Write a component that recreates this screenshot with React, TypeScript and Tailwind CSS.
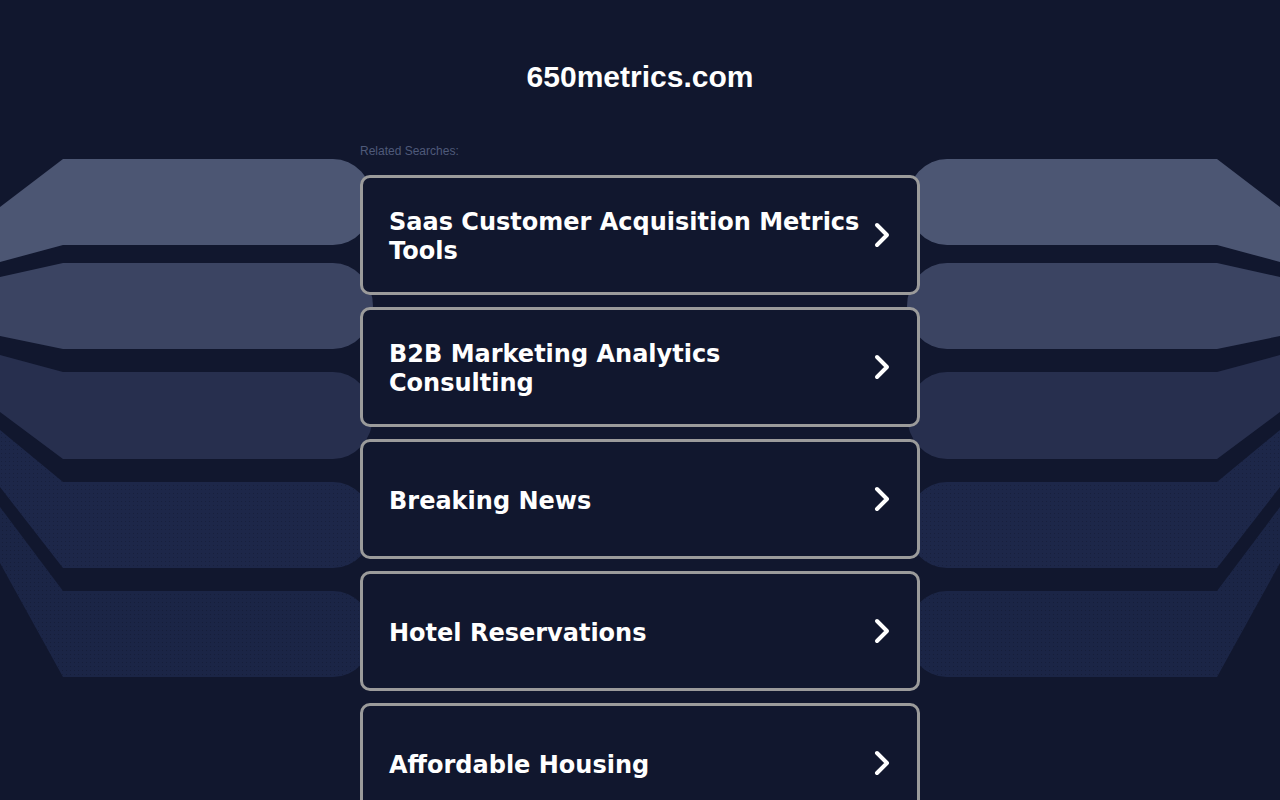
import React from 'react';

const searches = [
  'Saas Customer Acquisition Metrics Tools',
  'B2B Marketing Analytics Consulting',
  'Breaking News',
  'Hotel Reservations',
  'Affordable Housing',
];

// left-side bands; the right side is the same shapes mirrored
const bands = [
  { d: 'M0,207 L63,159 L333,159 A40,43 0 0 1 333,245 L63,245 L0,262 Z', fill: '#4c5673' },
  { d: 'M0,277 L63,263 L333,263 A40,43 0 0 1 333,349 L63,349 L0,336 Z', fill: '#3b4462' },
  { d: 'M0,355 L63,372 L333,372 A40,43.5 0 0 1 333,459 L63,459 L0,412 Z', fill: '#272f4e' },
  { d: 'M0,430 L63,482 L333,482 A40,43 0 0 1 333,568 L63,568 L0,487 Z', fill: 'url(#dotsA)' },
  { d: 'M0,507 L63,591 L333,591 A40,43 0 0 1 333,677 L63,677 L0,563 Z', fill: 'url(#dotsB)' },
];

function Backdrop() {
  return (
    <svg className="absolute top-0 left-1/2 -translate-x-1/2" width="1280" height="800" viewBox="0 0 1280 800">
      <defs>
        <pattern id="dotsA" width="4" height="4" patternUnits="userSpaceOnUse">
          <rect width="4" height="4" fill="#1d2749" />
          <rect x="1" y="1" width="1" height="1" fill="#18203d" />
        </pattern>
        <pattern id="dotsB" width="4" height="4" patternUnits="userSpaceOnUse">
          <rect width="4" height="4" fill="#1b2546" />
          <rect x="2" y="2" width="1" height="1" fill="#161e3a" />
        </pattern>
      </defs>
      {bands.map((b, i) => (
        <g key={i}>
          <path d={b.d} fill={b.fill} />
          <path d={b.d} fill={b.fill} transform="translate(1280 0) scale(-1 1)" />
        </g>
      ))}
    </svg>
  );
}

function Chevron() {
  return (
    <svg width="16" height="26" viewBox="0 0 16 26" className="shrink-0">
      <path d="M3 3 L13 13 L3 23" fill="none" stroke="#ffffff" strokeWidth="4" strokeLinecap="round" strokeLinejoin="round" />
    </svg>
  );
}

export default function App() {
  return (
    <div className="relative min-h-screen overflow-hidden bg-[#11172e]">
      <Backdrop />
      <div className="relative w-[560px] mx-auto">
        <h1 className="pt-[60px] text-center text-[30px] leading-[34px] font-bold text-white" style={{ fontFamily: '"Liberation Sans", Arial, sans-serif' }}>
          650metrics.com
        </h1>
        <div className="mt-[49px] text-[12px] leading-[16px] text-[#4f5a7a]" style={{ fontFamily: '"Liberation Sans", Arial, sans-serif' }}>
          Related Searches:
        </div>
        <div className="mt-[16px] flex flex-col gap-[12px]">
          {searches.map(s => (
            <a key={s} href="#" className="h-[120px] shrink-0 flex items-center justify-between gap-3 rounded-[10px] border-[3px] border-[#9b9b9b] bg-[#11172e] pl-[26px] pr-[27px]">
              <span className="pt-[4px] text-[24px] leading-[29px] font-bold text-white" style={{ fontFamily: '"DejaVu Sans", Verdana, sans-serif' }}>
                {s}
              </span>
              <Chevron />
            </a>
          ))}
        </div>
      </div>
    </div>
  );
}
